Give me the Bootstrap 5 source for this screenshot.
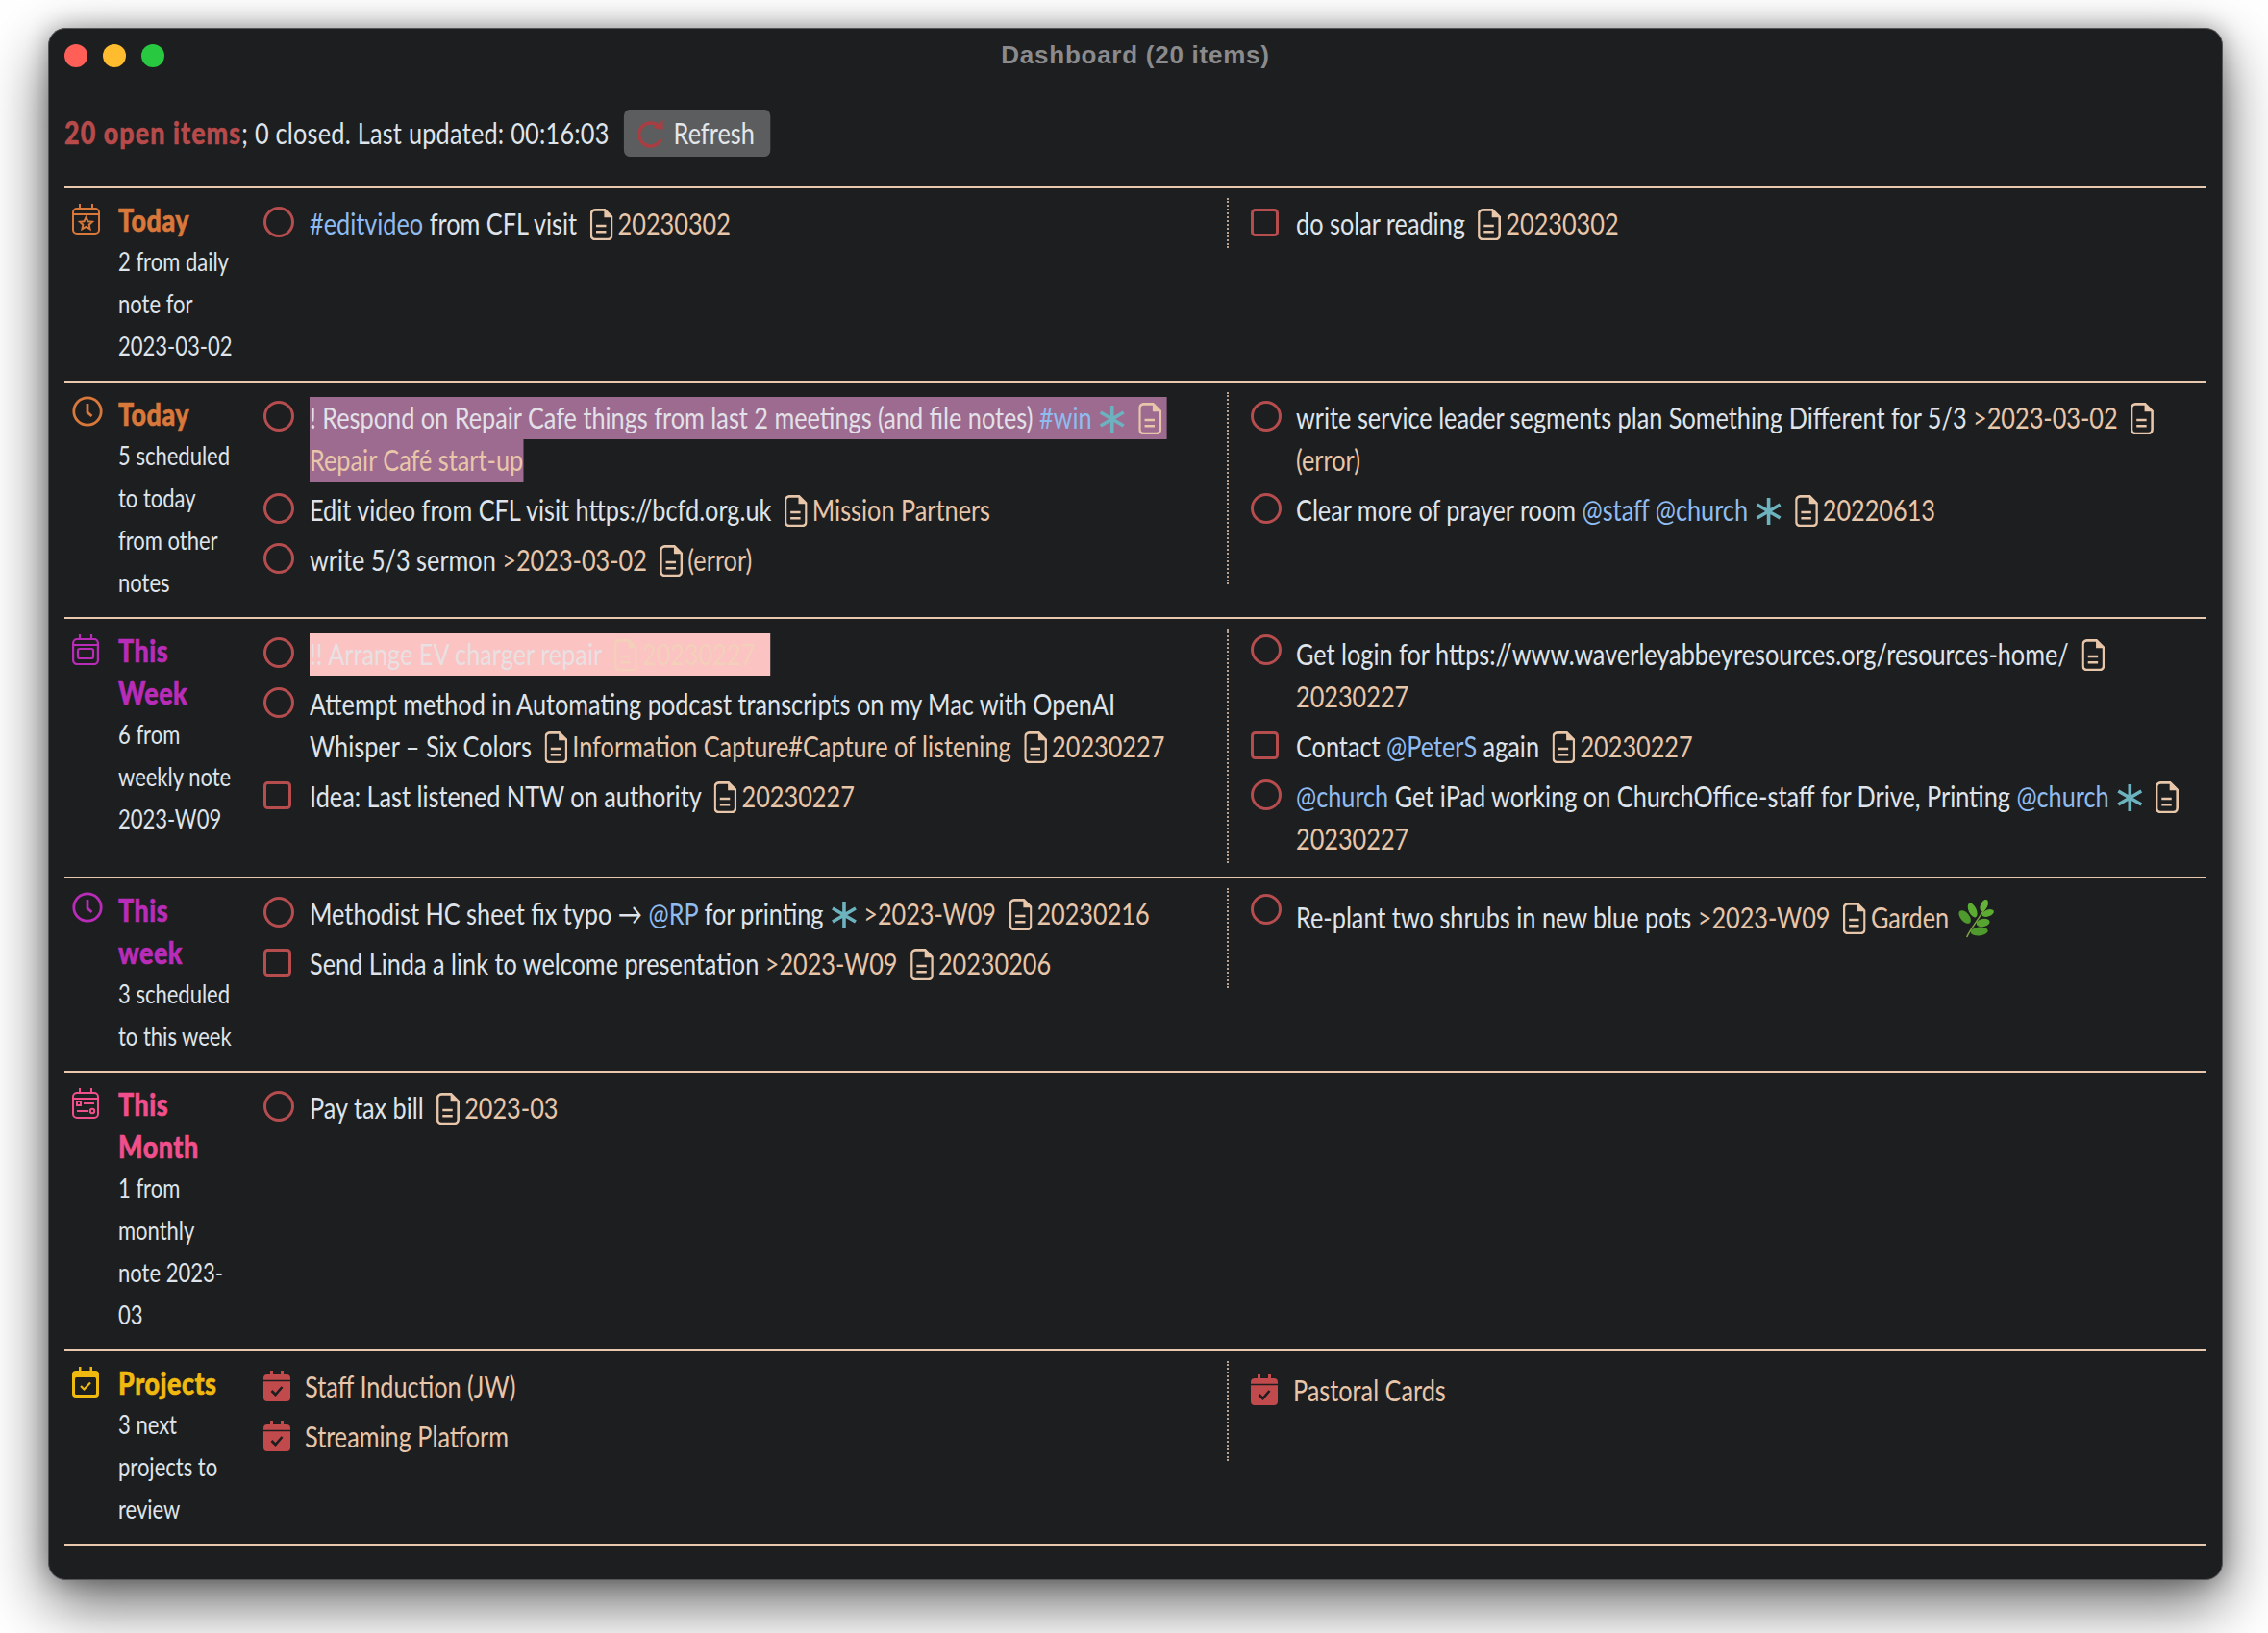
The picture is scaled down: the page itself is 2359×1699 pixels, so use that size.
<!DOCTYPE html>
<html lang="en">
<head>
    <meta charset="UTF-8">
    <meta name="viewport" content="width=device-width, initial-scale=1.0">
    <title>Dashboard (20 items)</title>
    <link rel="stylesheet" href="https://cdn.jsdelivr.net/npm/bootstrap@5.3.0/dist/css/bootstrap.min.css">
    <style>
        /* the reference uses a condensed face, so Lato gets squeezed sideways by --sq */
        :root { --sq: .815; }
        body { background: #fff; min-height: 100vh; padding: 29px 47px 56px 50px; font-family: "Lato", "Liberation Sans", sans-serif; font-size: 31px; line-height: 44px; color: #dfe4ea; }
        .app-window { background: #1d1e20; border: 1px solid #55565a; border-radius: 18px; height: 1615px; padding: 0 16px; box-shadow: 0 24px 64px rgba(0,0,0,.6), 0 0 24px rgba(0,0,0,.3); }
        .title-bar { height: 84px; display: grid; grid-template-columns: 1fr auto 1fr; align-items: start; padding-top: 16px; }
        .lights { gap: 16px; }
        .light { width: 24px; height: 24px; border-radius: 50%; }
        .win-title { font-family: "Liberation Sans", sans-serif; font-weight: 700; font-size: 26px; letter-spacing: .75px; line-height: 22px; color: #8b8b8d; }
        .status-row { height: 49px; margin-bottom: 31px; line-height: 49px; letter-spacing: .3px; width: calc(100% / var(--sq)); transform: scaleX(var(--sq)); transform-origin: 0 0; }
        .status-text { padding-bottom: 2px; }
        .open-count { color: #b74b4c; font-weight: 900; font-size: 33px; letter-spacing: 1.3px; -webkit-text-stroke: .5px #b74b4c; }
        .btn-refresh { width: calc(153px / var(--sq)); height: 49px; background: #5c5d5f; color: #e4e7ea; border: 0; border-radius: 7px; margin-left: calc(15px / var(--sq)); padding: 0 0 0 calc(15px / var(--sq)); font-size: 31px; line-height: 49px; gap: calc(9px / var(--sq)); }
        .refresh-icon { width: calc(28px / var(--sq)); height: 30px; }
        .section-row { border-top: 2px solid #e8c8ae; padding: 10px 0 14px; }
        .section-row.last-row { border-bottom: 2px solid #e8c8ae; }
        .head-col { width: 190px; flex: none; }
        .head-icon { width: 56px; flex: none; padding: 6px 0 0 8px; }
        .head-text { width: calc(125px / var(--sq)); flex: none; transform: scaleX(var(--sq)); transform-origin: 0 0; }
        .head-title { font-weight: 900; font-size: 33px; letter-spacing: .6px; -webkit-text-stroke: .6px currentColor; }
        .head-desc { font-size: 27px; }
        .c-today { color: #d8783a; }
        .c-week { color: #b92cb8; }
        .c-month { color: #f04f8c; }
        .c-proj { color: #f0b90f; }
        .items-col { padding-left: 17px; padding-right: 30px; }
        .items-col.second { padding-left: 23px; padding-right: 0; border-left: 2px dotted #b9a08c; }
        .task { --mw: 48px; padding: 4px 0; display: flex; }
        .second .task { --mw: 47px; }
        .task.proj-task { --mw: 43px; }
        .second .task.proj-task { --mw: 44px; }
        .task-mark { width: var(--mw); flex: none; }
        .task-text { flex: none; width: calc((100% - var(--mw)) / var(--sq)); transform: scaleX(var(--sq)); transform-origin: 0 0; }
        .mark-circle { display: block; width: 32px; height: 32px; margin-top: 5px; }
        .mark-square { display: block; width: 29px; height: 29px; margin-top: 7px; }
        .mark-high { margin-top: 2px; }
        .proj-icon { display: block; width: 28px; height: 32px; margin-top: 6px; }
        .tk-tag { color: #8fbcf0; }
        .tk-note { color: #e8c6aa; }
        .doc-icon { display: inline-block; width: calc(24px / var(--sq)); height: 33px; vertical-align: -6px; margin: 0 calc(5px / var(--sq)) 0 calc(7px / var(--sq)); }
        .star-icon { display: inline-block; width: calc(28px / var(--sq)); height: 30px; vertical-align: -5px; margin: 0 0 0 1px; }
        .herb-icon { display: inline-block; width: calc(38px / var(--sq)); height: 40px; vertical-align: -10px; margin-left: 4px; }
        .hl-mauve { background: #9c6b8f; padding: 2.400px 0 4.400px; -webkit-box-decoration-break: clone; box-decoration-break: clone; color: #e3e0e8; }
        .hl-pink { background: #fcc3c3; padding: 2.400px 20px 4.400px 0; color: #e8e0e2; }
        .hl-pink .tk-note { color: #f3d0ba; }
    </style>
</head>
<body>
    <svg width="0" height="0" class="position-absolute">
        <symbol id="i-doc" viewBox="0 0 23 32" preserveAspectRatio="none">
            <path d="M5 1.3H14.5L21.7 8.5V27a4 4 0 0 1-4 4H5a4 4 0 0 1-4-4V5.300a4 4 0 0 1 4-4z" fill="none" stroke="currentColor" stroke-width="2.500"/>
            <path d="M14 1.500L21.500 9H14z" fill="currentColor"/>
            <path d="M6 17.500H16M6 23.500H16" stroke="currentColor" stroke-width="2.500"/>
        </symbol>
        <symbol id="i-star" viewBox="0 0 28 30" preserveAspectRatio="none">
            <path d="M14 1V29M2 8L26 22M26 8L2 22" stroke="#6db3bf" stroke-width="3.600"/>
        </symbol>
        <symbol id="i-open" viewBox="0 0 32 32">
            <circle cx="16" cy="16" r="14.500" fill="none" stroke="#b54c4e" stroke-width="3"/>
        </symbol>
        <symbol id="i-box" viewBox="0 0 29 29">
            <rect x="1.500" y="1.500" width="26" height="26" rx="3" fill="none" stroke="#b54c4e" stroke-width="3"/>
        </symbol>
        <symbol id="i-proj" viewBox="0 0 28 32">
            <path d="M7 0h3v4H18V0h3v4h3a4 4 0 0 1 4 4v20a4 4 0 0 1-4 4H4a4 4 0 0 1-4-4V8a4 4 0 0 1 4-4h3z" fill="#c04a4c"/>
            <path d="M0 10.500H28" stroke="#1d1e20" stroke-width="1.500"/>
            <path d="M8.500 21l4 4 7-8" fill="none" stroke="#1d1e20" stroke-width="2.600"/>
        </symbol>
        <symbol id="i-clock" viewBox="0 0 32 32">
            <circle cx="16" cy="16" r="14.200" fill="none" stroke="currentColor" stroke-width="2.800"/>
            <path d="M16 8V17L20.500 21" fill="none" stroke="currentColor" stroke-width="2.800"/>
        </symbol>
    </svg>

    <div class="app-window">
        <div class="title-bar">
            <div class="lights d-flex">
                <span class="light" style="background:#ff5f57"></span>
                <span class="light" style="background:#febc2e"></span>
                <span class="light" style="background:#28c840"></span>
            </div>
            <div class="win-title">Dashboard (20 items)</div>
            <div></div>
        </div>

        <div class="status-row d-flex align-items-center">
            <span class="status-text"><span class="open-count">20 open items</span>; 0 closed. Last updated: 00:16:03</span>
            <button class="btn btn-refresh d-flex align-items-center">
                <svg class="refresh-icon" viewBox="0 0 28 30" preserveAspectRatio="none"><path d="M22 8A12 12 0 1 0 24 21" fill="none" stroke="#a93e42" stroke-width="3.500"/><path d="M16 9L26 1V11z" fill="#a93e42"/></svg>
                Refresh
            </button>
        </div>

        <!-- Today, daily note -->
        <div class="section-row d-flex">
            <div class="head-col d-flex">
                <div class="head-icon c-today">
                    <svg width="29" height="32" viewBox="0 0 29 32" class="d-block" fill="none" stroke="currentColor" stroke-width="2"><rect x="1" y="5" width="27" height="26" rx="4"/><path d="M8 0V5M21 0V5M1 11H28"/><path d="M14.500 14l2 4.200 4.500.5-3.300 3 .9 4.500-4.100-2.300-4.100 2.300.9-4.500-3.300-3 4.500-.5z"/></svg>
                </div>
                <div class="head-text">
                    <div class="head-title c-today">Today</div>
                    <div class="head-desc">2 from daily note for 2023-03-02</div>
                </div>
            </div>
            <div class="row g-0 flex-grow-1 align-self-start">
                <div class="col-6 items-col">
                    <div class="task"><div class="task-mark"><svg class="mark-circle"><use href="#i-open"/></svg></div><div class="task-text"><span class="tk-tag">#editvideo</span> from CFL visit <span class="tk-note"><svg class="doc-icon"><use href="#i-doc"/></svg>20230302</span></div></div>
                </div>
                <div class="col-6 items-col second">
                    <div class="task"><div class="task-mark"><svg class="mark-square"><use href="#i-box"/></svg></div><div class="task-text">do solar reading <span class="tk-note"><svg class="doc-icon"><use href="#i-doc"/></svg>20230302</span></div></div>
                </div>
            </div>
        </div>

        <!-- Today, scheduled -->
        <div class="section-row d-flex">
            <div class="head-col d-flex">
                <div class="head-icon c-today pt-1"><svg class="d-block" width="32" height="32"><use href="#i-clock"/></svg></div>
                <div class="head-text">
                    <div class="head-title c-today">Today</div>
                    <div class="head-desc">5 scheduled to today from other notes</div>
                </div>
            </div>
            <div class="row g-0 flex-grow-1 align-self-start">
                <div class="col-6 items-col">
                    <div class="task"><div class="task-mark"><svg class="mark-circle"><use href="#i-open"/></svg></div><div class="task-text"><span class="hl-mauve">! Respond on Repair Cafe things from last 2 meetings (and file notes) <span class="tk-tag">#win</span> <svg class="star-icon"><use href="#i-star"/></svg> <span class="tk-note"><svg class="doc-icon"><use href="#i-doc"/></svg>Repair Café start-up</span></span></div></div>
                    <div class="task"><div class="task-mark"><svg class="mark-circle"><use href="#i-open"/></svg></div><div class="task-text">Edit video from CFL visit https://bcfd.org.uk <span class="tk-note"><svg class="doc-icon"><use href="#i-doc"/></svg>Mission Partners</span></div></div>
                    <div class="task"><div class="task-mark"><svg class="mark-circle"><use href="#i-open"/></svg></div><div class="task-text">write 5/3 sermon <span class="tk-note">&gt;2023-03-02 <svg class="doc-icon"><use href="#i-doc"/></svg>(error)</span></div></div>
                </div>
                <div class="col-6 items-col second align-self-stretch">
                    <div class="task"><div class="task-mark"><svg class="mark-circle"><use href="#i-open"/></svg></div><div class="task-text">write service leader segments plan Something Different for 5/3 <span class="tk-note">&gt;2023-03-02 <svg class="doc-icon"><use href="#i-doc"/></svg>(error)</span></div></div>
                    <div class="task"><div class="task-mark"><svg class="mark-circle"><use href="#i-open"/></svg></div><div class="task-text">Clear more of prayer room <span class="tk-tag">@staff @church</span> <svg class="star-icon"><use href="#i-star"/></svg> <span class="tk-note"><svg class="doc-icon"><use href="#i-doc"/></svg>20220613</span></div></div>
                </div>
            </div>
        </div>

        <!-- This Week, weekly note -->
        <div class="section-row d-flex">
            <div class="head-col d-flex">
                <div class="head-icon c-week">
                    <svg width="28" height="32" viewBox="0 0 28 32" class="d-block" fill="none" stroke="currentColor" stroke-width="2.200"><rect x="1.100" y="5" width="25.800" height="26" rx="4"/><path d="M8 0V5M20 0V5M1 11H27"/><rect x="6" y="15" width="16" height="10" rx="2"/></svg>
                </div>
                <div class="head-text">
                    <div class="head-title c-week">This Week</div>
                    <div class="head-desc">6 from weekly note 2023-W09</div>
                </div>
            </div>
            <div class="row g-0 flex-grow-1">
                <div class="col-6 items-col">
                    <div class="task"><div class="task-mark"><svg class="mark-circle"><use href="#i-open"/></svg></div><div class="task-text"><span class="hl-pink">!! Arrange EV charger repair <span class="tk-note"><svg class="doc-icon"><use href="#i-doc"/></svg>20230227</span></span></div></div>
                    <div class="task"><div class="task-mark"><svg class="mark-circle"><use href="#i-open"/></svg></div><div class="task-text">Attempt method in Automating podcast transcripts on my Mac with OpenAI Whisper – Six Colors <span class="tk-note"><svg class="doc-icon"><use href="#i-doc"/></svg>Information Capture#Capture of listening <svg class="doc-icon"><use href="#i-doc"/></svg>20230227</span></div></div>
                    <div class="task"><div class="task-mark"><svg class="mark-square"><use href="#i-box"/></svg></div><div class="task-text">Idea: Last listened NTW on authority <span class="tk-note"><svg class="doc-icon"><use href="#i-doc"/></svg>20230227</span></div></div>
                </div>
                <div class="col-6 items-col second">
                    <div class="task"><div class="task-mark"><svg class="mark-circle mark-high"><use href="#i-open"/></svg></div><div class="task-text">Get login for https://www.waverleyabbeyresources.org/resources-home/ <span class="tk-note"><svg class="doc-icon"><use href="#i-doc"/></svg>20230227</span></div></div>
                    <div class="task"><div class="task-mark"><svg class="mark-square"><use href="#i-box"/></svg></div><div class="task-text">Contact <span class="tk-tag">@PeterS</span> again <span class="tk-note"><svg class="doc-icon"><use href="#i-doc"/></svg>20230227</span></div></div>
                    <div class="task"><div class="task-mark"><svg class="mark-circle"><use href="#i-open"/></svg></div><div class="task-text"><span class="tk-tag">@church</span> Get iPad working on ChurchOffice-staff for Drive, Printing <span class="tk-tag">@church</span> <svg class="star-icon"><use href="#i-star"/></svg> <span class="tk-note"><svg class="doc-icon"><use href="#i-doc"/></svg>20230227</span></div></div>
                </div>
            </div>
        </div>

        <!-- This week, scheduled -->
        <div class="section-row d-flex">
            <div class="head-col d-flex">
                <div class="head-icon c-week pt-1"><svg class="d-block" width="32" height="32"><use href="#i-clock"/></svg></div>
                <div class="head-text">
                    <div class="head-title c-week">This week</div>
                    <div class="head-desc">3 scheduled to this week</div>
                </div>
            </div>
            <div class="row g-0 flex-grow-1 align-self-start">
                <div class="col-6 items-col">
                    <div class="task"><div class="task-mark"><svg class="mark-circle"><use href="#i-open"/></svg></div><div class="task-text">Methodist HC sheet fix typo → <span class="tk-tag">@RP</span> for printing <svg class="star-icon"><use href="#i-star"/></svg> <span class="tk-note">&gt;2023-W09 <svg class="doc-icon"><use href="#i-doc"/></svg>20230216</span></div></div>
                    <div class="task"><div class="task-mark"><svg class="mark-square"><use href="#i-box"/></svg></div><div class="task-text">Send Linda a link to welcome presentation <span class="tk-note">&gt;2023-W09 <svg class="doc-icon"><use href="#i-doc"/></svg>20230206</span></div></div>
                </div>
                <div class="col-6 items-col second">
                    <div class="task"><div class="task-mark"><svg class="mark-circle mark-high"><use href="#i-open"/></svg></div><div class="task-text pt-1">Re-plant two shrubs in new blue pots <span class="tk-note">&gt;2023-W09 <svg class="doc-icon"><use href="#i-doc"/></svg>Garden</span>
                        <svg class="herb-icon" viewBox="0 0 38 40" preserveAspectRatio="none">
                            <path d="M9 39C14 28 22 20 29 7" fill="none" stroke="#7ba83f" stroke-width="1.500"/>
                            <ellipse cx="7" cy="18" rx="8" ry="4.500" transform="rotate(50 7 18)" fill="#4f9a2c"/>
                            <ellipse cx="15" cy="11" rx="8" ry="4" transform="rotate(65 15 11)" fill="#5cab32"/>
                            <ellipse cx="27" cy="6" rx="6.500" ry="3.600" transform="rotate(-65 27 6)" fill="#64b338"/>
                            <ellipse cx="31" cy="14" rx="6.500" ry="3.400" transform="rotate(-20 31 14)" fill="#5cab32"/>
                            <ellipse cx="26" cy="24" rx="7" ry="4" transform="rotate(-10 26 24)" fill="#57a530"/>
                            <ellipse cx="22" cy="33" rx="9" ry="4.500" transform="rotate(-5 22 33)" fill="#4f9a2c"/>
                        </svg></div></div>
                </div>
            </div>
        </div>

        <!-- This Month -->
        <div class="section-row d-flex">
            <div class="head-col d-flex">
                <div class="head-icon c-month">
                    <svg width="28" height="32" viewBox="0 0 28 32" class="d-block" fill="none" stroke="currentColor" stroke-width="2"><rect x="1" y="5" width="26" height="26" rx="4"/><path d="M8 0V5M20 0V5M1 11H27M12 16H23M5 24H17"/><rect x="5" y="14" width="4" height="4"/><circle cx="21" cy="24" r="2.200"/></svg>
                </div>
                <div class="head-text">
                    <div class="head-title c-month">This Month</div>
                    <div class="head-desc">1 from monthly note 2023-03</div>
                </div>
            </div>
            <div class="row g-0 flex-grow-1 align-self-start">
                <div class="col-6 items-col">
                    <div class="task"><div class="task-mark"><svg class="mark-circle"><use href="#i-open"/></svg></div><div class="task-text">Pay tax bill <span class="tk-note"><svg class="doc-icon"><use href="#i-doc"/></svg>2023-03</span></div></div>
                </div>
            </div>
        </div>

        <!-- Projects -->
        <div class="section-row last-row d-flex">
            <div class="head-col d-flex">
                <div class="head-icon c-proj">
                    <svg width="28" height="32" viewBox="0 0 28 32" class="d-block" fill="none"><path d="M7 0h2.500v4H18.500V0H21v4h3a4 4 0 0 1 4 4v20a4 4 0 0 1-4 4H4a4 4 0 0 1-4-4V8a4 4 0 0 1 4-4h3z" fill="currentColor"/><rect x="3" y="11" width="22" height="18" rx="1.500" fill="#1d1e20"/><path d="M9 20l3.500 3.500 6.500-7" stroke="currentColor" stroke-width="2.200"/></svg>
                </div>
                <div class="head-text">
                    <div class="head-title c-proj">Projects</div>
                    <div class="head-desc">3 next projects to review</div>
                </div>
            </div>
            <div class="row g-0 flex-grow-1 align-self-start">
                <div class="col-6 items-col">
                    <div class="task proj-task"><div class="task-mark"><svg class="proj-icon"><use href="#i-proj"/></svg></div><div class="task-text tk-note">Staff Induction (JW)</div></div>
                    <div class="task proj-task"><div class="task-mark"><svg class="proj-icon"><use href="#i-proj"/></svg></div><div class="task-text tk-note">Streaming Platform</div></div>
                </div>
                <div class="col-6 items-col second">
                    <div class="task proj-task"><div class="task-mark pt-1"><svg class="proj-icon"><use href="#i-proj"/></svg></div><div class="task-text tk-note pt-1">Pastoral Cards</div></div>
                </div>
            </div>
        </div>
    </div>

    <script src="https://cdn.jsdelivr.net/npm/bootstrap@5.3.0/dist/js/bootstrap.bundle.min.js"></script>
</body>
</html>
